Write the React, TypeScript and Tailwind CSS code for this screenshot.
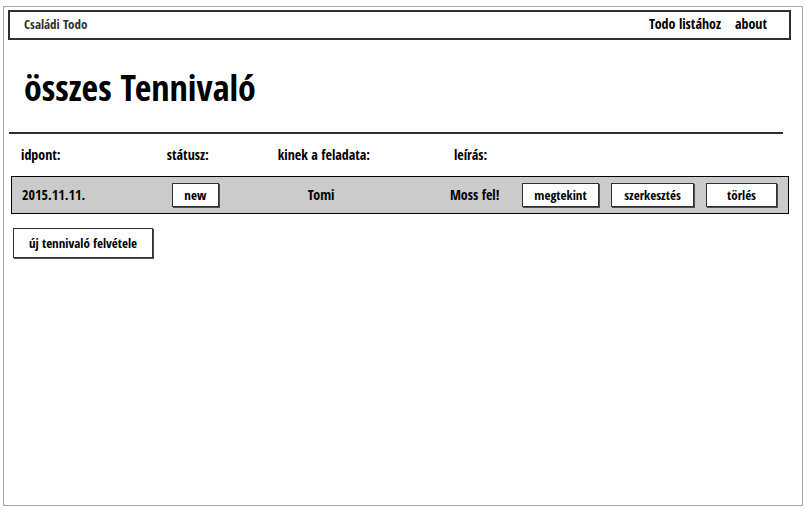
import type { ReactNode } from "react";

const todos = [
  { date: "2015.11.11.", status: "new", owner: "Tomi", description: "Moss fel!" },
];

function SketchButton({ children, className }: { children: ReactNode; className: string }) {
  return (
    <button
      type="button"
      className={`block shrink-0 cursor-pointer whitespace-nowrap border border-[#303030] bg-white text-center text-[13px] leading-5 text-black shadow-[1px_1px_0_#505050] ${className}`}
    >
      {children}
    </button>
  );
}

export default function App() {
  return (
    <div className="flex min-h-screen flex-col bg-white pt-1.5 pr-0.5 pb-1 pl-[3px] font-['Open_Sans_Condensed','Open_Sans','Liberation_Sans',sans-serif] font-bold text-black">
      <div className="grow border border-[#a8a8a8] pt-[3px] pr-[11px] pl-1">
        <header className="flex h-[30px] items-center justify-between border-2 border-[#303030] pr-[22px] pb-0.5 pl-3.5">
          <span className="text-[13px] leading-5 text-[#303030]">Családi Todo</span>
          <nav className="flex gap-3.5 text-sm">
            <a href="#lista">Todo listához</a>
            <a href="#about">about</a>
          </nav>
        </header>

        <main>
          <h1 className="mr-2 ml-px border-b-2 border-[#303030] pt-6 pb-5 pl-[15px] text-4xl leading-12">
            összes Tennivaló
          </h1>

          <div className="pr-0.5 pl-[3px]">
            <table className="w-full table-fixed border-separate border-spacing-0 text-left text-sm">
              <colgroup>
                <col className="w-[19%]" />
                <col className="w-[14%]" />
                <col className="w-[22%]" />
                <col className="w-[10%]" />
                <col className="w-[35%]" />
              </colgroup>
              <thead>
                <tr className="h-[42px]">
                  <th scope="col" className="pl-2.5">idpont:</th>
                  <th scope="col" className="pl-2">státusz:</th>
                  <th scope="col" className="pl-2.5">kinek a feladata:</th>
                  <th scope="col" className="pl-[15px]">leírás:</th>
                  <td></td>
                </tr>
              </thead>
              <tbody>
                {todos.map((todo) => (
                  <tr key={todo.date} className="h-[38px] bg-[#cbcbcb] *:border-y *:border-black">
                    <td className="border-l pl-2.5">{todo.date}</td>
                    <td className="pl-[13px]">
                      <SketchButton className="h-6 w-[47px]">{todo.status}</SketchButton>
                    </td>
                    <td className="pl-10">{todo.owner}</td>
                    <td className="pl-[11px] whitespace-nowrap">{todo.description}</td>
                    <td className="border-r pr-[11px]">
                      <div className="flex justify-end gap-3">
                        <SketchButton className="h-6 w-[77px]">megtekint</SketchButton>
                        <SketchButton className="h-6 w-[83px]">szerkesztés</SketchButton>
                        <SketchButton className="h-6 w-[71px]">törlés</SketchButton>
                      </div>
                    </td>
                  </tr>
                ))}
              </tbody>
            </table>

            <SketchButton className="mt-3.5 ml-0.5 h-[30px] w-[140px]">új tennivaló felvétele</SketchButton>
          </div>
        </main>
      </div>
    </div>
  );
}
